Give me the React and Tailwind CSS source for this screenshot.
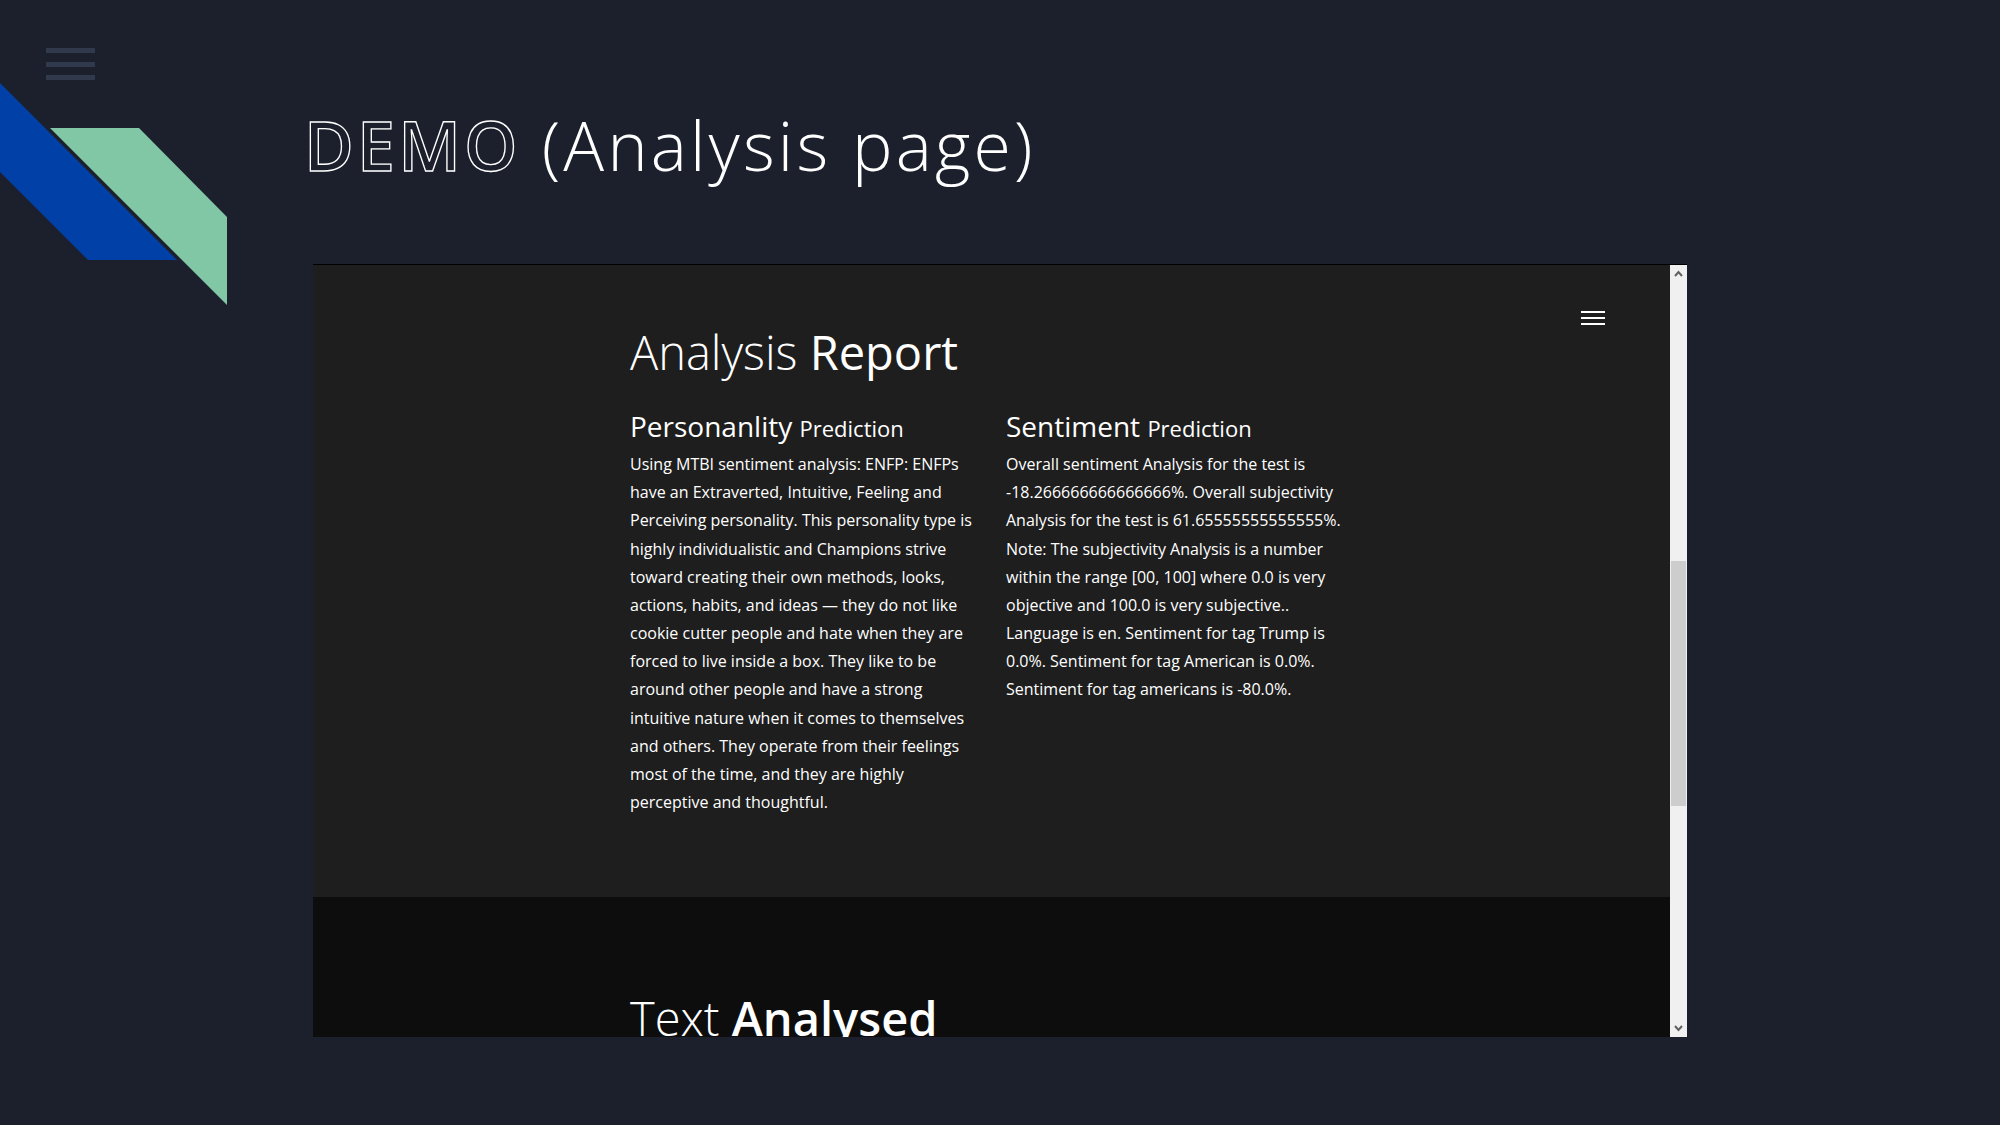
import React from 'react';

const personalityLines = [
  'Using MTBI sentiment analysis: ENFP: ENFPs',
  'have an Extraverted, Intuitive, Feeling and',
  'Perceiving personality. This personality type is',
  'highly individualistic and Champions strive',
  'toward creating their own methods, looks,',
  'actions, habits, and ideas — they do not like',
  'cookie cutter people and hate when they are',
  'forced to live inside a box. They like to be',
  'around other people and have a strong',
  'intuitive nature when it comes to themselves',
  'and others. They operate from their feelings',
  'most of the time, and they are highly',
  'perceptive and thoughtful.'
];

const sentimentLines = [
  'Overall sentiment Analysis for the test is',
  '-18.266666666666666%. Overall subjectivity',
  'Analysis for the test is 61.65555555555555%.',
  'Note: The subjectivity Analysis is a number',
  'within the range [00, 100] where 0.0 is very',
  'objective and 100.0 is very subjective..',
  'Language is en. Sentiment for tag Trump is',
  '0.0%. Sentiment for tag American is 0.0%.',
  'Sentiment for tag americans is -80.0%.'
];

const Column = ({ title, lines, width }) => (
  <div className={width}>
    <div className="leading-[28px] whitespace-nowrap">
      <span className="text-[28px]">{title} </span>
      <span className="text-[22px]">Prediction</span>
    </div>
    <div className="mt-[5px] text-[16px] leading-[28.17px]">
      {lines.map((line, i) => (
        <div key={i} className="whitespace-nowrap">{line}</div>
      ))}
    </div>
  </div>
);

const Chevron = ({ up }) => (
  <svg width="9" height="7" viewBox="0 0 9 7">
    <polyline
      points={up ? '1,6 4.5,2 8,6' : '1,1 4.5,5 8,1'}
      fill="none"
      stroke="#606060"
      strokeWidth="2"
    />
  </svg>
);

export default function App() {
  return (
    <div className="relative w-[2000px] h-[1125px] overflow-hidden bg-[#1b202c] font-['Open_Sans',sans-serif] text-white">
      {/* corner decoration */}
      <svg className="absolute left-0 top-0" width="230" height="310" viewBox="0 0 230 310">
        <polygon points="0,83 177,260 88,260 0,172" fill="#0040a7" />
        <polygon points="50,128 139,128 227,217 227,305" fill="#81c6a5" />
      </svg>

      {/* slide menu icon */}
      <div className="absolute left-[46px] top-[48px] flex flex-col gap-[8.5px]">
        <div className="w-[49px] h-[5px] bg-[#313a4c]" />
        <div className="w-[49px] h-[5px] bg-[#313a4c]" />
        <div className="w-[49px] h-[5px] bg-[#313a4c]" />
      </div>

      <div className="flex flex-col pt-[111px]">
        <h1 className="pl-[304px] text-[68px] leading-[68px] font-light tracking-[3.2px] whitespace-nowrap">
          <span className="font-semibold text-transparent [-webkit-text-stroke:1.3px_white]">DEMO</span> (Analysis page)
        </h1>

        {/* embedded page screenshot */}
        <div className="ml-[313px] mt-[85px] w-[1374px] h-[773px] border-t border-black flex">
          <div className="flex-1 flex flex-col overflow-hidden">
            <div className="relative h-[632px] shrink-0 bg-[#1e1e1e] pl-[317px] pt-[64px]">
              <div className="absolute right-[65px] top-[46px] flex flex-col gap-[4px]">
                <div className="w-[24px] h-[2px] bg-white" />
                <div className="w-[24px] h-[2px] bg-white" />
                <div className="w-[24px] h-[2px] bg-white" />
              </div>
              <h2 className="text-[47px] leading-[47px] whitespace-nowrap">
                <span className="font-light">Analysis</span> <span className="font-medium">Report</span>
              </h2>
              <div className="flex mt-[36px]">
                <Column title="Personanlity" lines={personalityLines} width="w-[376px]" />
                <Column title="Sentiment" lines={sentimentLines} width="w-[400px]" />
              </div>
            </div>
            <div className="flex-1 bg-[#0d0d0d] pl-[317px] pt-[98px]">
              <h2 className="text-[47px] leading-[47px] whitespace-nowrap">
                <span className="font-light">Text</span> <span className="font-semibold">Analysed</span>
              </h2>
            </div>
          </div>

          {/* scrollbar */}
          <div className="w-[17px] bg-[#f0f0f0] flex flex-col items-center">
            <div className="h-[17px] flex items-center justify-center">
              <Chevron up />
            </div>
            <div className="mt-[279px] w-[15px] h-[245px] bg-[#cdcdcd]" />
            <div className="mt-auto h-[17px] flex items-center justify-center">
              <Chevron />
            </div>
          </div>
        </div>
      </div>
    </div>
  );
}
